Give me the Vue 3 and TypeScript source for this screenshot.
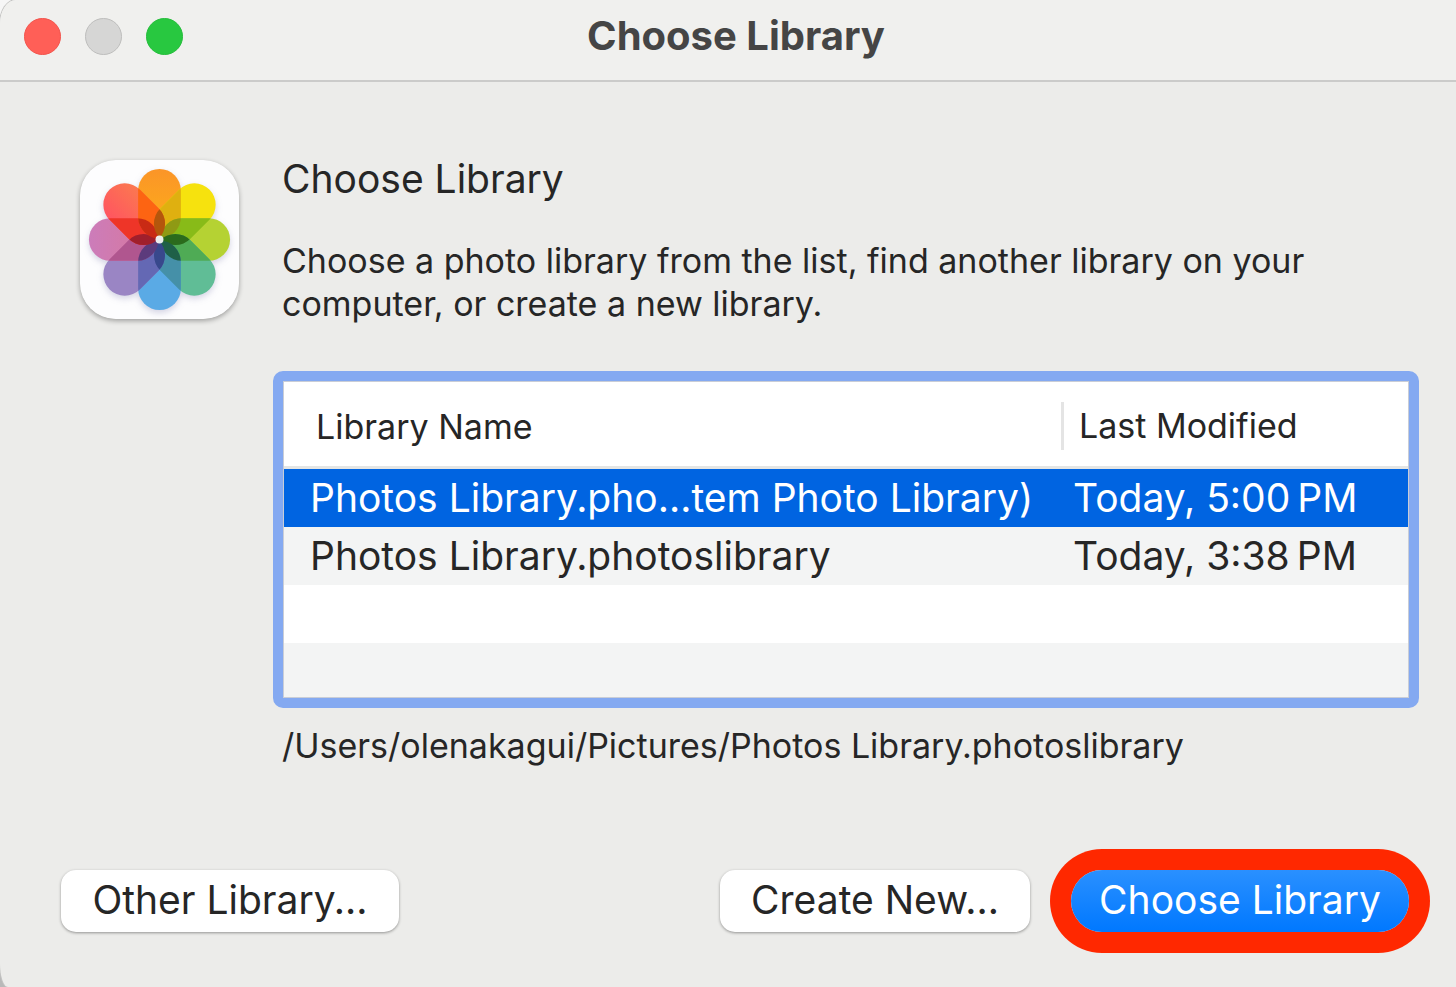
<script setup lang="ts">
import { ref } from 'vue'

interface Library {
  label: string
  modified: string
  path: string
}

interface Overlap {
  clip: number
  shape: number
  color: string
}

const libraries: Library[] = [
  {
    label: 'Photos Library.pho…tem Photo Library)',
    modified: 'Today, 5:00\u202fPM',
    path: '/Users/olenakagui/Pictures/Photos Library.photoslibrary',
  },
  {
    label: 'Photos Library.photoslibrary',
    modified: 'Today, 3:38\u202fPM',
    path: '/Users/olenakagui/Pictures/Photos Library.photoslibrary',
  },
]

const selected = ref<number>(0)

// Petals run clockwise from the top one.
const petals: string[] = [
  'url(#petal-orange)', '#f6e20e', '#b5d233', '#60bd96',
  '#5aaae5', '#9a85c4', 'url(#petal-pink)', 'url(#petal-red)',
]

const neighbours: string[] = [
  '#dfb010', '#88bb18', '#4fab55', '#4590a8',
  '#6468b4', '#b0568f', '#ee3528', '#fd6412',
]

const centres: string[] = [
  '#8f9a14', '#2b6b1c', '#1f6048', '#38488c',
  '#5c3b7c', '#a01f2c', '#c92a14', '#b4560c',
]

const overlaps: Overlap[] = [
  ...neighbours.map((color, i) => ({ clip: i, shape: (i + 1) % 8, color })),
  ...centres.map((color, i) => ({ clip: i, shape: (i + 2) % 8, color })),
]
</script>

<template>
  <main class="window">
    <header class="titlebar">
      <div class="lights">
        <button class="light close" type="button" aria-label="Close"></button>
        <button class="light minimize" type="button" aria-label="Minimize" disabled></button>
        <button class="light zoom" type="button" aria-label="Zoom"></button>
      </div>
      <h1 class="title">Choose Library</h1>
    </header>

    <section class="content">
      <svg class="app-icon" viewBox="0 0 160 160" aria-hidden="true">
        <defs>
          <linearGradient id="petal-orange" x1="0" y1="0" x2="0" y2="1">
            <stop offset="0" stop-color="#fb9528" />
            <stop offset="1" stop-color="#fdb116" />
          </linearGradient>
          <linearGradient id="petal-pink" x1="0" y1="0" x2="0" y2="1">
            <stop offset="0" stop-color="#cc7cba" />
            <stop offset="1" stop-color="#d9789a" />
          </linearGradient>
          <linearGradient id="petal-red" x1="0" y1="0" x2="1" y2="0">
            <stop offset="0" stop-color="#ff5560" />
            <stop offset="1" stop-color="#fb7850" />
          </linearGradient>
          <clipPath v-for="(_, i) in petals" :id="`petal-${i}`" :key="i">
            <rect x="-21.5" y="-71" width="43" height="70" rx="21.5" :transform="`rotate(${i * 45})`" />
          </clipPath>
        </defs>
        <rect width="160" height="160" rx="36" fill="#fdfdfe" />
        <g transform="translate(80 80)">
          <g class="flower">
            <rect
              v-for="(color, i) in petals"
              :key="i"
              x="-21.5"
              y="-71"
              width="43"
              height="70"
              rx="21.5"
              :fill="color"
              :transform="`rotate(${i * 45})`"
            />
          </g>
          <g v-for="(o, i) in overlaps" :key="i" :clip-path="`url(#petal-${o.clip})`">
            <rect x="-21.5" y="-71" width="43" height="70" rx="21.5" :fill="o.color" :transform="`rotate(${o.shape * 45})`" />
          </g>
          <circle r="4" fill="#eceeed" />
        </g>
      </svg>

      <div class="details">
        <h2 class="heading">Choose Library</h2>
        <p class="description">
          Choose a photo library from the list, find another library on your computer, or create a new library.
        </p>

        <div class="list">
          <table>
            <thead>
              <tr>
                <th scope="col">Library Name</th>
                <th scope="col" class="date"><span>Last Modified</span></th>
              </tr>
            </thead>
            <tbody>
              <tr
                v-for="(library, i) in libraries"
                :key="library.label"
                :class="{ selected: selected === i }"
                :aria-selected="selected === i"
                @click="selected = i"
              >
                <td>{{ library.label }}</td>
                <td>{{ library.modified }}</td>
              </tr>
              <tr class="blank"><td></td><td></td></tr>
              <tr class="blank last"><td></td><td></td></tr>
            </tbody>
          </table>
        </div>

        <p class="path">{{ libraries[selected].path }}</p>
      </div>
    </section>

    <footer class="actions">
      <button class="button other" type="button">Other Library...</button>
      <button class="button create" type="button">Create New...</button>
      <button class="button primary" type="button">Choose Library</button>
    </footer>
  </main>
</template>

<style>
body {
  margin: 0;
  background: linear-gradient(#f6f6f6 50%, #b9b9b9 50%);
}
</style>

<style scoped>
.window {
  box-sizing: border-box;
  display: flex;
  flex-direction: column;
  min-height: 100vh;
  overflow: hidden;
  border-radius: 16px 0 0 8px / 24px 0 0 24px;
  background: #ececea;
  box-shadow: 0 0 0 1px #c4c4c3;
  color: #262626;
  font-family: Inter, "Liberation Sans", sans-serif;
  font-size: 34px;
}

h1, h2, p {
  margin: 0;
  font-weight: 400;
}

.titlebar {
  box-sizing: border-box;
  display: grid;
  grid-template-columns: 1fr auto 1fr;
  align-items: center;
  height: 82px;
  padding: 0 8px 9px 24px;
  border-bottom: 2px solid #cbcbca;
  background: #f0f0ee;
}

.lights {
  display: flex;
  gap: 24px;
  padding-top: 2px;
}

.light {
  box-sizing: border-box;
  width: 37px;
  height: 37px;
  padding: 0;
  border: 1px solid #f2544c;
  border-radius: 50%;
  background: #ff5f57;
}

.minimize {
  border-color: #bdbdbc;
  background: #d6d6d5;
}

.zoom {
  border-color: #25bd3b;
  background: #28c840;
}

.title {
  color: #454545;
  font-size: 40px;
  font-weight: 700;
  line-height: 48px;
}

.content {
  display: grid;
  grid-template-columns: 160px 1fr;
  column-gap: 42px;
  padding: 73px 47px 0 80px;
}

.app-icon {
  width: 159px;
  height: 159px;
  margin-top: 5px;
  border-radius: 36px;
  box-shadow: 0 2px 5px rgb(0 0 0 / 32%);
}

.flower {
  filter: drop-shadow(0 3px 3px rgb(90 90 150 / 25%));
}

.heading {
  font-size: 39px;
  line-height: 48px;
}

.description {
  margin-top: 36px;
  line-height: 43px;
}

.list {
  margin: 46px -10px 0 -9px;
  border: 10px solid #84a9f1;
  border-radius: 10px;
  background: #fff;
}

table {
  width: 100%;
  border: 1px solid #c9cdd6;
  border-collapse: separate;
  border-spacing: 0;
  table-layout: fixed;
}

th {
  box-sizing: border-box;
  height: 87px;
  padding: 4px 0 0 32px;
  border-bottom: 3px solid #e4e5e4;
  font-weight: 400;
  text-align: left;
}

th.date {
  width: 347px;
  padding: 4px 0 0;
}

th.date span {
  display: block;
  padding-left: 15px;
  border-left: 3px solid #e4e4e4;
  line-height: 48px;
}

td {
  box-sizing: border-box;
  height: 58px;
  padding: 0 0 0 26px;
  font-size: 39px;
  line-height: 48px;
  white-space: nowrap;
}

td + td {
  padding-left: 12px;
}

tbody tr:nth-child(even) {
  background: #f3f4f4;
}

tbody .selected {
  background: #0064e1;
  color: #fff;
}

.last td {
  height: 54px;
}

.path {
  margin-top: 16px;
  line-height: 43px;
}

.actions {
  display: flex;
  gap: 41px;
  margin-top: auto;
  padding: 0 47px 55px 61px;
}

.button {
  height: 62px;
  padding: 0 0 2px;
  border: 0;
  border-radius: 15px;
  background: #fff;
  box-shadow: 0 1px 3px rgb(0 0 0 / 38%);
  color: #262626;
  font-family: inherit;
  font-size: 39px;
  line-height: 48px;
}

.other {
  width: 338px;
  margin-right: auto;
}

.create {
  width: 310px;
}

.primary {
  width: 338px;
  border-radius: 31px;
  background: linear-gradient(#2a90ff, #0078ff);
  box-shadow: 0 0 0 21px #ff2800;
  color: #fff;
}
</style>
